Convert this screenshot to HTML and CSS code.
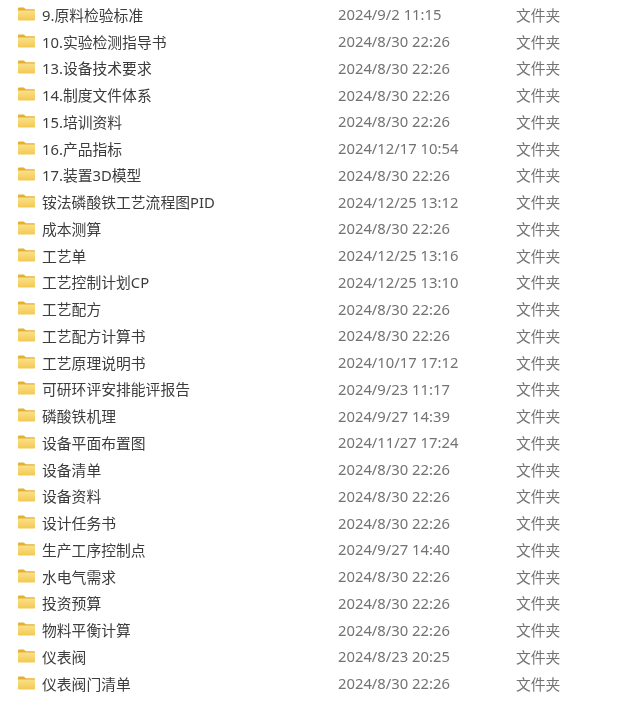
FILE: index.html
```html
<!DOCTYPE html>
<html lang="zh-CN">
<head>
    <meta charset="UTF-8">
    <title>文件列表</title>
    <link rel="stylesheet" href="styles.css">
</head>
<body>
    <svg class="defs" width="0" height="0">
        <defs>
            <linearGradient id="folderFront" x1="0" y1="0" x2="0" y2="1">
                <stop offset="0" stop-color="#fae08a"/>
                <stop offset="1" stop-color="#f3c850"/>
            </linearGradient>
            <symbol id="folder" viewBox="0 0 18 14">
                <path d="M0 1.2C0 .5.5 0 1.2 0h5l2 2h8.6c.7 0 1.2.5 1.2 1.2V5H0z" fill="#e5b030"/>
                <path d="M0 3.4h18v9.4c0 .7-.5 1.2-1.2 1.2H1.2C.5 14 0 13.500 0 12.800z" fill="url(#folderFront)"/>
            </symbol>
        </defs>
    </svg>
    <div class="list">
        <div class="row"><svg class="icon"><use href="#folder"/></svg><span class="name">9.原料检验标准</span><span class="date">2024/9/2 11:15</span><span class="type">文件夹</span></div>
        <div class="row"><svg class="icon"><use href="#folder"/></svg><span class="name">10.实验检测指导书</span><span class="date">2024/8/30 22:26</span><span class="type">文件夹</span></div>
        <div class="row"><svg class="icon"><use href="#folder"/></svg><span class="name">13.设备技术要求</span><span class="date">2024/8/30 22:26</span><span class="type">文件夹</span></div>
        <div class="row"><svg class="icon"><use href="#folder"/></svg><span class="name">14.制度文件体系</span><span class="date">2024/8/30 22:26</span><span class="type">文件夹</span></div>
        <div class="row"><svg class="icon"><use href="#folder"/></svg><span class="name">15.培训资料</span><span class="date">2024/8/30 22:26</span><span class="type">文件夹</span></div>
        <div class="row"><svg class="icon"><use href="#folder"/></svg><span class="name">16.产品指标</span><span class="date">2024/12/17 10:54</span><span class="type">文件夹</span></div>
        <div class="row"><svg class="icon"><use href="#folder"/></svg><span class="name">17.装置3D模型</span><span class="date">2024/8/30 22:26</span><span class="type">文件夹</span></div>
        <div class="row"><svg class="icon"><use href="#folder"/></svg><span class="name">铵法磷酸铁工艺流程图PID</span><span class="date">2024/12/25 13:12</span><span class="type">文件夹</span></div>
        <div class="row"><svg class="icon"><use href="#folder"/></svg><span class="name">成本测算</span><span class="date">2024/8/30 22:26</span><span class="type">文件夹</span></div>
        <div class="row"><svg class="icon"><use href="#folder"/></svg><span class="name">工艺单</span><span class="date">2024/12/25 13:16</span><span class="type">文件夹</span></div>
        <div class="row"><svg class="icon"><use href="#folder"/></svg><span class="name">工艺控制计划CP</span><span class="date">2024/12/25 13:10</span><span class="type">文件夹</span></div>
        <div class="row"><svg class="icon"><use href="#folder"/></svg><span class="name">工艺配方</span><span class="date">2024/8/30 22:26</span><span class="type">文件夹</span></div>
        <div class="row"><svg class="icon"><use href="#folder"/></svg><span class="name">工艺配方计算书</span><span class="date">2024/8/30 22:26</span><span class="type">文件夹</span></div>
        <div class="row"><svg class="icon"><use href="#folder"/></svg><span class="name">工艺原理说明书</span><span class="date">2024/10/17 17:12</span><span class="type">文件夹</span></div>
        <div class="row"><svg class="icon"><use href="#folder"/></svg><span class="name">可研环评安排能评报告</span><span class="date">2024/9/23 11:17</span><span class="type">文件夹</span></div>
        <div class="row"><svg class="icon"><use href="#folder"/></svg><span class="name">磷酸铁机理</span><span class="date">2024/9/27 14:39</span><span class="type">文件夹</span></div>
        <div class="row"><svg class="icon"><use href="#folder"/></svg><span class="name">设备平面布置图</span><span class="date">2024/11/27 17:24</span><span class="type">文件夹</span></div>
        <div class="row"><svg class="icon"><use href="#folder"/></svg><span class="name">设备清单</span><span class="date">2024/8/30 22:26</span><span class="type">文件夹</span></div>
        <div class="row"><svg class="icon"><use href="#folder"/></svg><span class="name">设备资料</span><span class="date">2024/8/30 22:26</span><span class="type">文件夹</span></div>
        <div class="row"><svg class="icon"><use href="#folder"/></svg><span class="name">设计任务书</span><span class="date">2024/8/30 22:26</span><span class="type">文件夹</span></div>
        <div class="row"><svg class="icon"><use href="#folder"/></svg><span class="name">生产工序控制点</span><span class="date">2024/9/27 14:40</span><span class="type">文件夹</span></div>
        <div class="row"><svg class="icon"><use href="#folder"/></svg><span class="name">水电气需求</span><span class="date">2024/8/30 22:26</span><span class="type">文件夹</span></div>
        <div class="row"><svg class="icon"><use href="#folder"/></svg><span class="name">投资预算</span><span class="date">2024/8/30 22:26</span><span class="type">文件夹</span></div>
        <div class="row"><svg class="icon"><use href="#folder"/></svg><span class="name">物料平衡计算</span><span class="date">2024/8/30 22:26</span><span class="type">文件夹</span></div>
        <div class="row"><svg class="icon"><use href="#folder"/></svg><span class="name">仪表阀</span><span class="date">2024/8/23 20:25</span><span class="type">文件夹</span></div>
        <div class="row"><svg class="icon"><use href="#folder"/></svg><span class="name">仪表阀门清单</span><span class="date">2024/8/30 22:26</span><span class="type">文件夹</span></div>
    </div>
</body>
</html>
```

FILE: styles.css
```css
html, body {
    margin: 0;
    background: #fff;
}
body {
    font-family: "Noto Sans", "Noto Sans CJK SC", sans-serif;
    font-size: 14.8px;
    overflow: hidden;
}
.defs {
    display: block;
    height: 0;
}
.list {
    padding: 1px 0 0 18px;
    filter: blur(0.35px);
}
.row {
    display: flex;
    align-items: center;
    height: 26.76px;
    white-space: nowrap;
}
.icon {
    width: 17px;
    height: 14px;
    flex: none;
    margin: -1px 7px 0 0;
}
.name {
    width: 296px;
    flex: none;
    color: #3c3c3c;
}
.date {
    width: 178px;
    flex: none;
    color: #737373;
}
.type {
    color: #737373;
}
```
